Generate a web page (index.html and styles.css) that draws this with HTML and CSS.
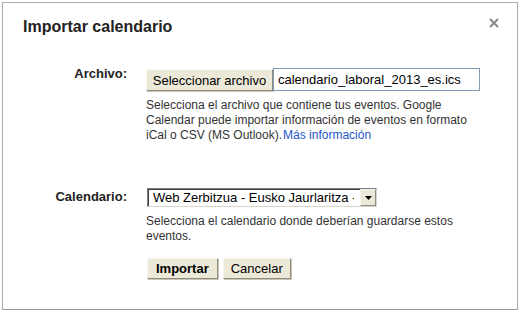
FILE: index.html
```html
<!DOCTYPE html>
<html>
<head>
  <title>Importar calendario</title>
  <link rel="stylesheet" href="styles.css">
</head>
<body>
  <div class="dialog">
    <div class="dialog-header">
      <h1 class="dialog-title">Importar calendario</h1>
      <button class="dialog-close" type="button" aria-label="Cerrar">
        <svg width="10" height="10" viewBox="0 0 10 10">
          <path d="M1 1 L9 9 M9 1 L1 9" stroke="#8a8a8a" stroke-width="2" fill="none"/>
        </svg>
      </button>
    </div>

    <form class="dialog-body">
      <div class="field field-file">
        <label class="field-label" for="fileName">Archivo:</label>
        <div class="field-control">
          <div class="file-picker">
            <button class="btn" type="button">Seleccionar archivo</button>
            <input class="file-name" id="fileName" type="text" value="calendario_laboral_2013_es.ics" readonly>
          </div>
          <p class="field-hint">Selecciona el archivo que contiene tus eventos. Google Calendar puede importar información de eventos en formato iCal o CSV (MS Outlook).<a href="#">Más información</a></p>
        </div>
      </div>

      <div class="field field-calendar">
        <label class="field-label" for="calendarSelect">Calendario:</label>
        <div class="field-control">
          <div class="select-box">
            <select class="select" id="calendarSelect">
              <option>Web Zerbitzua - Eusko Jaurlaritza - Gobierno Vasco</option>
            </select>
            <span class="select-arrow">
              <svg width="7" height="4" viewBox="0 0 7 4"><path d="M0 0 H7 L3.5 4 Z" fill="#000"/></svg>
            </span>
          </div>
          <p class="field-hint">Selecciona el calendario donde deberían guardarse estos eventos.</p>

          <div class="actions">
            <button class="btn btn-primary" type="submit">Importar</button>
            <button class="btn" type="button">Cancelar</button>
          </div>
        </div>
      </div>
    </form>
  </div>
</body>
</html>
```

FILE: styles.css
```css
body {
  margin: 0;
  padding: 0;
  background-color: #fff;
  font-family: "Liberation Sans", Arial, sans-serif;
  color: #222;
}

.dialog {
  box-sizing: border-box;
  width: 516px;
  height: 308px;
  margin: 2px 0 0 2px;
  border: 1px solid #acacac;
  border-bottom-color: #999;
  background-color: #fff;
  box-shadow: 0 1px 1px rgba(0, 0, 0, 0.15);
}

.dialog-header {
  display: flex;
  justify-content: space-between;
  align-items: flex-start;
  padding: 14px 18px 0 20px;
}

.dialog-title {
  margin: 0;
  font-size: 16px;
  line-height: 20px;
  font-weight: bold;
  color: #222;
}

.dialog-close {
  display: flex;
  margin-top: 1px;
  padding: 0;
  border: none;
  background: none;
  cursor: pointer;
}

.dialog-body {
  padding: 29px 30px 0 20px;
}

.field {
  display: grid;
  grid-template-columns: 104px 1fr;
  column-gap: 19px;
  align-items: start;
}

.field-calendar {
  margin-top: 45px;
}

.field-label {
  text-align: right;
  font-size: 13px;
  line-height: 16px;
  font-weight: bold;
  color: #222;
}

.field-calendar .field-label {
  padding-top: 1px;
}

.field-file .field-control {
  padding-top: 2px;
}

.file-picker {
  display: flex;
  align-items: flex-end;
}

.btn {
  box-sizing: border-box;
  height: 21px;
  padding: 0 7px;
  border: 1px solid;
  border-color: #f7f6f1 #8f8c7f #8f8c7f #f7f6f1;
  background-color: #ece9d8;
  box-shadow: 1px 1px 0 #c9c6b8;
  font-family: "Liberation Sans", Arial, sans-serif;
  font-size: 13px;
  color: #000;
  cursor: pointer;
}

.file-picker .btn {
  height: 22px;
  width: 127px;
  padding: 0;
}

.file-name {
  box-sizing: border-box;
  width: 207px;
  height: 23px;
  margin: 0;
  padding: 0 4px;
  border: 1px solid #7f9db9;
  font-family: "Liberation Sans", Arial, sans-serif;
  font-size: 13px;
  color: #000;
}

.field-hint {
  margin: 7px 0 0;
  font-size: 12px;
  line-height: 15px;
  color: #333;
}

.field-hint a {
  margin-left: 1px;
  color: #1c55c9;
  text-decoration: none;
}

.select-box {
  box-sizing: border-box;
  display: flex;
  width: 230px;
  height: 19px;
  margin-left: 1px;
  border: 1px solid;
  border-color: #7a7a7a #d8d6cc #d8d6cc #7a7a7a;
  background-color: #fff;
}

.select {
  flex: 1;
  min-width: 0;
  margin: 0;
  padding: 0 6px 0 4px;
  border: none;
  border-left: 1px solid #404040;
  border-top: 1px solid #404040;
  appearance: none;
  -webkit-appearance: none;
  background: transparent;
  font-family: "Liberation Sans", Arial, sans-serif;
  font-size: 13px;
  line-height: 16px;
  color: #000;
}

.select-arrow {
  box-sizing: border-box;
  display: flex;
  align-items: center;
  justify-content: center;
  width: 16px;
  border: 1px solid;
  border-color: #f7f6f1 #8f8c7f #8f8c7f #f7f6f1;
  background-color: #ece9d8;
}

.actions {
  display: flex;
  gap: 5px;
  margin: 14px 0 0 1px;
}

.btn-primary {
  padding: 0 8px;
  font-weight: bold;
}
```
